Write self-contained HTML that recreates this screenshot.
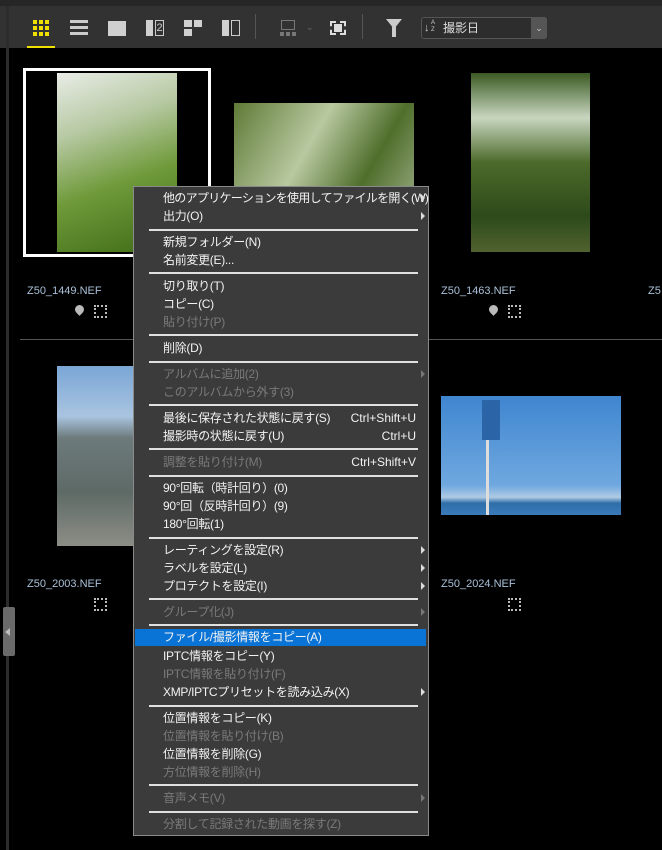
<!DOCTYPE html>
<html><head><meta charset="utf-8"><style>
*{margin:0;padding:0;box-sizing:border-box}
body{width:662px;height:850px;background:#000;position:relative;overflow:hidden;font-family:"Liberation Sans","Noto Sans CJK JP",sans-serif}
.a{position:absolute}
.tb{left:0;top:0;width:662px;height:48px;background:#323232;border-top:6px solid #262626}
.ico{position:absolute;background:#d0d0d0}
.fn{position:absolute;font-size:11px;color:#a9c0d8}
.menu{left:133px;top:186px;width:296px;height:650px;background:#3b3b3b;border:1px solid #8a8a8a}
.it{position:absolute;left:29px;height:18px;line-height:18px;font-size:12px;letter-spacing:-0.3px;color:#f2f2f2;white-space:nowrap}
.d{color:#7a7a7a}
.sc{position:absolute;right:12px;height:18px;line-height:18px;font-size:12px;color:#f2f2f2}
.sp{position:absolute;left:15px;width:269px;height:2px;background:#e0e0e0}
.ar{position:absolute;right:3px;width:0;height:0;border-left:4px solid #ddd;border-top:4px solid transparent;border-bottom:4px solid transparent}
.ar.d{border-left-color:#777}
</style></head><body>
<div class="a tb"></div>
<div class="a" style="left:6px;top:6px;width:3px;height:844px;background:#2c2c2c"></div>
<div class="a" style="left:33px;top:20px;width:16px;height:16px;background:
linear-gradient(#f0e000,#f0e000) 0 0/4px 4px,linear-gradient(#f0e000,#f0e000) 6px 0/4px 4px,linear-gradient(#f0e000,#f0e000) 12px 0/4px 4px,
linear-gradient(#f0e000,#f0e000) 0 6px/4px 4px,linear-gradient(#f0e000,#f0e000) 6px 6px/4px 4px,linear-gradient(#f0e000,#f0e000) 12px 6px/4px 4px,
linear-gradient(#f0e000,#f0e000) 0 12px/4px 4px,linear-gradient(#f0e000,#f0e000) 6px 12px/4px 4px,linear-gradient(#f0e000,#f0e000) 12px 12px/4px 4px;background-repeat:no-repeat"></div>
<div class="a" style="left:27px;top:46px;width:28px;height:2px;background:#f0e000"></div>
<div class="a" style="left:70px;top:20px;width:18px;height:16px;background:repeating-linear-gradient(#ccc 0 3px,transparent 3px 6px)"></div>
<div class="ico" style="left:108px;top:21px;width:18px;height:15px"></div>
<div class="ico" style="left:146px;top:20px;width:7px;height:16px"></div>
<div class="a" style="left:155px;top:20px;width:9px;height:16px;border:1px solid #ccc;color:#ccc;font-size:11px;line-height:14px;text-align:center">2</div>
<div class="ico" style="left:184px;top:20px;width:8px;height:7px"></div>
<div class="ico" style="left:194px;top:20px;width:8px;height:7px"></div>
<div class="ico" style="left:184px;top:29px;width:8px;height:7px"></div>
<div class="ico" style="left:222px;top:20px;width:7px;height:16px"></div>
<div class="a" style="left:231px;top:20px;width:9px;height:16px;border:1px solid #ccc"></div>
<div class="a" style="left:255px;top:14px;width:1px;height:25px;background:#555"></div>
<div class="a" style="left:281px;top:20px;width:14px;height:10px;border:1px solid #777"></div>
<div class="a" style="left:280px;top:32px;width:16px;height:4px;background:repeating-linear-gradient(90deg,#777 0 4px,transparent 4px 6px)"></div>
<div class="a" style="left:306px;top:22px;color:#666;font-size:9px">⌄</div>
<div class="a" style="left:330px;top:21px;width:16px;height:14px;border:2px dashed #ddd"></div>
<div class="ico" style="left:334px;top:24px;width:8px;height:8px;background:#ddd"></div>
<div class="a" style="left:362px;top:14px;width:1px;height:25px;background:#555"></div>
<div class="a" style="left:386px;top:19px;width:0;height:0;border-left:8px solid transparent;border-right:8px solid transparent;border-top:10px solid #ccc"></div>
<div class="a" style="left:392px;top:27px;width:4px;height:10px;background:#ccc"></div>
<div class="a" style="left:421px;top:17px;width:126px;height:22px;background:#2d2d2d;border:1px solid #555;border-radius:3px;color:#ddd;font-size:12px;line-height:20px;padding-left:21px">撮影日</div>
<div class="a" style="left:424px;top:20px;font-size:11px;color:#ccc;line-height:16px">↓</div>
<div class="a" style="left:431px;top:20px;font-size:6px;color:#ccc;line-height:7px">A<br>Z</div>
<div class="a" style="left:531px;top:17px;width:16px;height:22px;background:#555;border-radius:0 3px 3px 0;color:#ccc;font-size:9px;text-align:center;line-height:22px">⌄</div>
<div class="a" style="left:23px;top:68px;width:188px;height:189px;border:3px solid #fff"></div>
<div class="a" style="left:57px;top:73px;width:120px;height:179px;background:linear-gradient(160deg,#e8ece6 0%,#b7c9a3 30%,#6f9a3a 60%,#3e6a16 100%)"></div>
<div class="a" style="left:234px;top:103px;width:180px;height:119px;background:linear-gradient(120deg,#5f7a36,#b8c8a0 40%,#4f6e2b 70%,#9fb08a)"></div>
<div class="a" style="left:471px;top:73px;width:119px;height:179px;background:linear-gradient(180deg,#3b5a22,#c8d6c0 25%,#4c6a2a 50%,#2d4a1a 80%,#50622f)"></div>
<div class="a" style="left:57px;top:366px;width:120px;height:180px;background:linear-gradient(180deg,#7aa6d6 0%,#a9c4e0 28%,#6d7a7c 40%,#5e6a66 70%,#8c8e86 100%)"></div>
<div class="a" style="left:441px;top:396px;width:180px;height:119px;background:linear-gradient(180deg,#3f86d0 0%,#6fa8df 75%,#b0cbe4 85%,#2f6ea8 90%,#3a7abb)"></div>
<div class="a" style="left:482px;top:400px;width:18px;height:40px;background:#2c64a8"></div>
<div class="a" style="left:486px;top:440px;width:3px;height:75px;background:#ddd"></div>
<div class="fn" style="left:27px;top:285px">Z50_1449.NEF</div>
<div class="fn" style="left:441px;top:285px">Z50_1463.NEF</div>
<div class="fn" style="left:648px;top:285px">Z5</div>
<div class="fn" style="left:27px;top:578px">Z50_2003.NEF</div>
<div class="fn" style="left:441px;top:578px">Z50_2024.NEF</div>
<div class="a" style="left:75px;top:305px;width:9px;height:9px;border-radius:50% 50% 50% 0;transform:rotate(-45deg);background:#bbb"></div>
<div class="a" style="left:94px;top:305px;width:13px;height:13px;border:2px dotted #bbb"></div>
<div class="a" style="left:489px;top:305px;width:9px;height:9px;border-radius:50% 50% 50% 0;transform:rotate(-45deg);background:#bbb"></div>
<div class="a" style="left:508px;top:305px;width:13px;height:13px;border:2px dotted #bbb"></div>
<div class="a" style="left:94px;top:598px;width:13px;height:13px;border:2px dotted #bbb"></div>
<div class="a" style="left:508px;top:598px;width:13px;height:13px;border:2px dotted #bbb"></div>
<div class="a" style="left:20px;top:339px;width:642px;height:1px;background:#555"></div>
<div class="a" style="left:3px;top:607px;width:12px;height:49px;background:#6a6a6a;border-radius:2px"></div>
<div class="a" style="left:5px;top:628px;width:0;height:0;border-right:5px solid #bbb;border-top:4px solid transparent;border-bottom:4px solid transparent"></div>
<div class="a menu">
<div class="it" style="top:2px;letter-spacing:-0.7px">他のアプリケーションを使用してファイルを開く(W)</div><div class="ar" style="top:7px"></div>
<div class="it" style="top:20px">出力(O)</div><div class="ar" style="top:25px"></div>
<div class="sp" style="top:42px"></div>
<div class="it" style="top:46px">新規フォルダー(N)</div>
<div class="it" style="top:64px">名前変更(E)...</div>
<div class="sp" style="top:85px"></div>
<div class="it" style="top:90px">切り取り(T)</div>
<div class="it" style="top:108px">コピー(C)</div>
<div class="it d" style="top:126px">貼り付け(P)</div>
<div class="sp" style="top:147px"></div>
<div class="it" style="top:152px">削除(D)</div>
<div class="sp" style="top:174px"></div>
<div class="it d" style="top:178px">アルバムに追加(2)</div><div class="ar d" style="top:183px"></div>
<div class="it d" style="top:196px">このアルバムから外す(3)</div>
<div class="sp" style="top:217px"></div>
<div class="it" style="top:222px">最後に保存された状態に戻す(S)</div><div class="sc" style="top:222px">Ctrl+Shift+U</div>
<div class="it" style="top:240px">撮影時の状態に戻す(U)</div><div class="sc" style="top:240px">Ctrl+U</div>
<div class="sp" style="top:261px"></div>
<div class="it d" style="top:266px">調整を貼り付け(M)</div><div class="sc d" style="top:266px">Ctrl+Shift+V</div>
<div class="sp" style="top:288px"></div>
<div class="it" style="top:292px">90°回転（時計回り）(0)</div>
<div class="it" style="top:310px">90°回（反時計回り）(9)</div>
<div class="it" style="top:328px">180°回転(1)</div>
<div class="sp" style="top:350px"></div>
<div class="it" style="top:354px">レーティングを設定(R)</div><div class="ar" style="top:359px"></div>
<div class="it" style="top:372px">ラベルを設定(L)</div><div class="ar" style="top:377px"></div>
<div class="it" style="top:390px">プロテクトを設定(I)</div><div class="ar" style="top:395px"></div>
<div class="sp" style="top:411px"></div>
<div class="it d" style="top:416px">グループ化(J)</div><div class="ar d" style="top:421px"></div>
<div class="sp" style="top:437px"></div>
<div class="a" style="left:1px;top:442px;width:291px;height:17px;background:#0a74d6"></div>
<div class="it" style="top:441px">ファイル/撮影情報をコピー(A)</div>
<div class="it" style="top:460px">IPTC情報をコピー(Y)</div>
<div class="it d" style="top:478px">IPTC情報を貼り付け(F)</div>
<div class="it" style="top:496px">XMP/IPTCプリセットを読み込み(X)</div><div class="ar" style="top:501px"></div>
<div class="sp" style="top:518px"></div>
<div class="it" style="top:522px">位置情報をコピー(K)</div>
<div class="it d" style="top:540px">位置情報を貼り付け(B)</div>
<div class="it" style="top:558px">位置情報を削除(G)</div>
<div class="it d" style="top:576px">方位情報を削除(H)</div>
<div class="sp" style="top:597px"></div>
<div class="it d" style="top:602px">音声メモ(V)</div><div class="ar d" style="top:607px"></div>
<div class="sp" style="top:624px"></div>
<div class="it d" style="top:628px">分割して記録された動画を探す(Z)</div>
</div>
</body></html>
